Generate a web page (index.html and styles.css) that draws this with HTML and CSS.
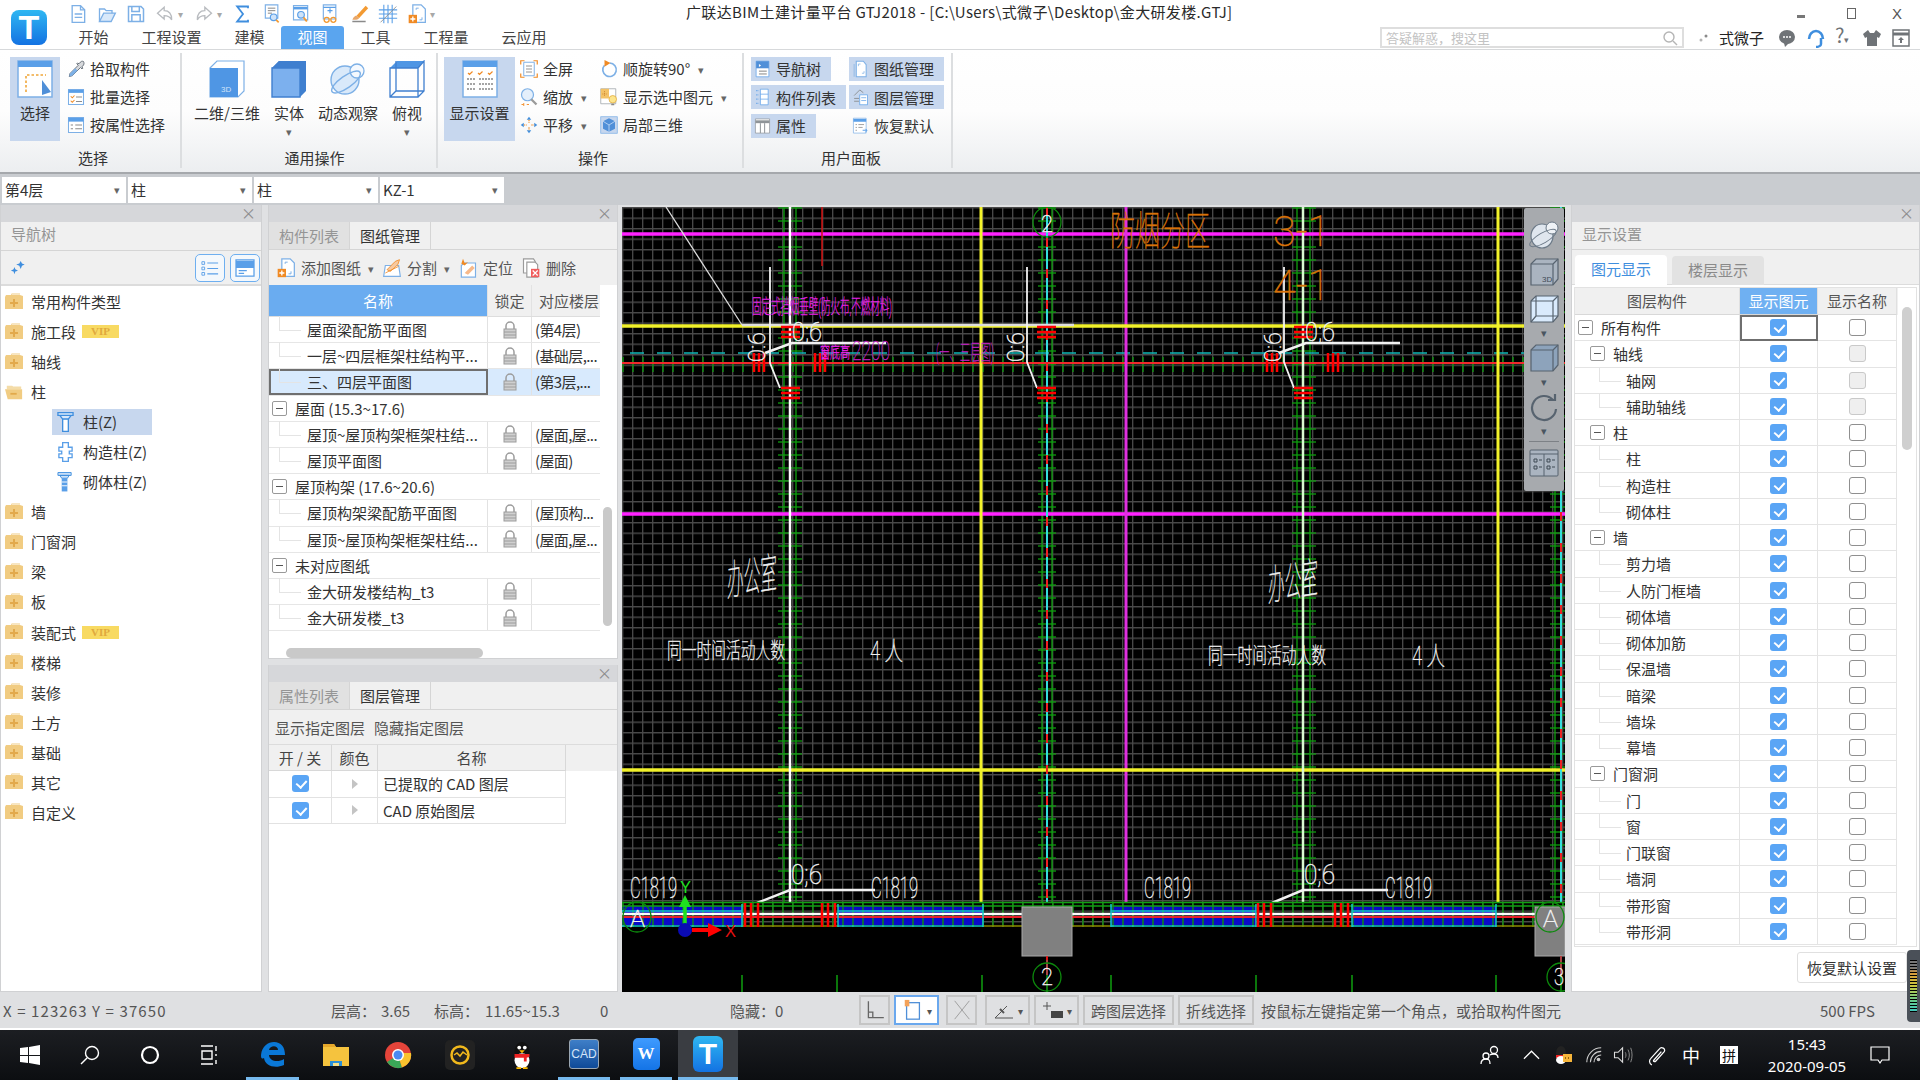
FILE: index.html
```html
<!DOCTYPE html>
<html lang="zh-CN">
<head>
<meta charset="utf-8">
<title>GTJ2018</title>
<link rel="stylesheet" href="styles.css">
</head>
<body>
<svg class="defs" xmlns="http://www.w3.org/2000/svg">
<symbol id="doc" viewBox="0 0 24 24"><path d="M5 2h10l5 5v15H5z" fill="#fff" stroke="#7db0e6" stroke-width="1.6"/><path d="M15 2v5h5M8 12h9M8 16h9" fill="none" stroke="#7db0e6" stroke-width="1.6"/></symbol>
<symbol id="open" viewBox="0 0 24 24"><path d="M3 21V6h6l2 2h7v4" fill="#fff" stroke="#7db0e6" stroke-width="1.6"/><path d="M3 21l5-10h14l-5 10z" fill="#d9e9fa" stroke="#7db0e6" stroke-width="1.6"/></symbol>
<symbol id="save" viewBox="0 0 24 24"><path d="M3 3h15l3 3v15H3z" fill="#fff" stroke="#7db0e6" stroke-width="1.8"/><path d="M7 3v6h9V3M7 21v-8h10v8" fill="none" stroke="#7db0e6" stroke-width="1.8"/></symbol>
<symbol id="undo" viewBox="0 0 24 24"><path d="M11 4L3 11l8 7v-4c4 0 7 1 9 5 0-7-3-11-9-11z" fill="#fff" stroke="#b9bcc0" stroke-width="1.6"/></symbol>
<symbol id="redo" viewBox="0 0 24 24"><path d="M13 4l8 7-8 7v-4c-4 0-7 1-9 5 0-7 3-11 9-11z" fill="#fff" stroke="#b9bcc0" stroke-width="1.6"/></symbol>
<symbol id="sigma" viewBox="0 0 24 24"><path d="M18 5V3H5l7 9-7 9h13v-2" fill="none" stroke="#3f8ede" stroke-width="2.2"/></symbol>
<symbol id="q1" viewBox="0 0 24 24"><path d="M4 1h15v16H4z" fill="#fff" stroke="#7db0e6" stroke-width="1.4"/><path d="M7 5h9M7 8h9M7 11h5" stroke="#888" stroke-width="1.2"/><circle cx="14" cy="16" r="4" fill="#cfe3f9" stroke="#5a9fe8" stroke-width="1.4"/><path d="M17 19l3 3" stroke="#f39a32" stroke-width="2"/></symbol>
<symbol id="q2" viewBox="0 0 24 24"><path d="M3 2h17v17H3z" fill="#fff" stroke="#7db0e6" stroke-width="1.4"/><path d="M3 5h17" stroke="#5a9fe8" stroke-width="3"/><circle cx="12" cy="13" r="4" fill="#cfe3f9" stroke="#5a9fe8" stroke-width="1.4"/><path d="M15 16l4 5" stroke="#f39a32" stroke-width="2.2"/></symbol>
<symbol id="q3" viewBox="0 0 24 24"><path d="M4 1h15v17H4z" fill="#fff" stroke="#7db0e6" stroke-width="1.4"/><path d="M4 4h15M9 8h6M12 5v6" stroke="#5a9fe8" stroke-width="1.4"/><circle cx="8" cy="19" r="3" fill="none" stroke="#f39a32" stroke-width="1.6"/><circle cx="16" cy="19" r="3" fill="none" stroke="#f39a32" stroke-width="1.6"/></symbol>
<symbol id="brush" viewBox="0 0 24 24"><path d="M20 2L9 14l3 3L23 5z" fill="#f39a32"/><path d="M4 21h16" stroke="#8a8a8a" stroke-width="1.8"/><path d="M9 14c-3 0-4 3-5 5 3 0 7 0 8-2z" fill="#e8a76a"/></symbol>
<symbol id="gridic" viewBox="0 0 24 24"><path d="M1 7h22M1 12h22M1 17h22M7 1v22M12 1v22M17 1v22" stroke="#5a9fe8" stroke-width="1.3"/><path d="M3 22L22 3" stroke="#8a8a8a" stroke-width="1"/></symbol>
<symbol id="docplus" viewBox="0 0 24 24"><path d="M7 1h10l5 5v16H7z" fill="#fff" stroke="#7db0e6" stroke-width="1.5"/><path d="M11 7V5h3M18 16v3h-3" fill="none" stroke="#7db0e6" stroke-width="1.2"/><rect x="2" y="13" width="10" height="10" fill="#f08a24"/><path d="M7 15v6M4 18h6" stroke="#fff" stroke-width="1.6"/></symbol>
<symbol id="pick" viewBox="0 0 24 24"><path d="M22 2c-2-1-4 0-5 2l-1 1-2-1-1 1 2 2L4 18l-1 4 4-1 11-11 2 2 1-1-1-2 1-1c2-2 2-4 1-6z" fill="#d7d9dc" stroke="#5d6670" stroke-width="1.2"/><path d="M4 18l7-7 3 3-7 7-4 1z" fill="#7db0e6"/></symbol>
<symbol id="batch" viewBox="0 0 24 24"><path d="M2 2h20v20H2z" fill="#fff" stroke="#7db0e6" stroke-width="1.4"/><path d="M2 4.5h20" stroke="#5a9fe8" stroke-width="4"/><path d="M5 11l2 2 3-3M5 17l2 2 3-3" fill="none" stroke="#f08a24" stroke-width="1.4"/><path d="M12 12h8M12 18h8" stroke="#8a8a8a" stroke-width="1.3"/></symbol>
<symbol id="attr" viewBox="0 0 24 24"><path d="M2 2h20v20H2z" fill="#fff" stroke="#7db0e6" stroke-width="1.4"/><path d="M2 5h20" stroke="#5a9fe8" stroke-width="5"/><path d="M5 12h3M11 12h9M5 17h3M11 17h9" stroke="#8a8a8a" stroke-width="1.4"/></symbol>
<symbol id="selbig" viewBox="0 0 36 38"><path d="M1 1h34v36H1z" fill="#fff" stroke="#7db0e6" stroke-width="1.5"/><path d="M1 4h34" stroke="#5a9fe8" stroke-width="6"/><path d="M9 32V15h20" fill="none" stroke="#f0a73a" stroke-width="1.6" stroke-dasharray="2.5 2"/><path d="M25 20v15l9-3z" fill="#4f8fd8"/></symbol>
<symbol id="box3d" viewBox="0 0 36 38"><path d="M1 8L8 1h27v30l-6 6H1z" fill="#fff" stroke="#7db0e6" stroke-width="1.2"/><path d="M1 8h28v29H1z" fill="#4f96e4"/><text x="12" y="32" font-size="8" fill="#cfe3f9" font-family="Liberation Sans">3D</text></symbol>
<symbol id="solid" viewBox="0 0 36 38"><path d="M1 8L8 1h27v30l-6 6V8z" fill="#3f7fcf"/><path d="M1 8L8 1h27l-6 7z" fill="#3f7fcf"/><path d="M1 8h28v29H1z" fill="#7cb0ee" stroke="#3f7fcf" stroke-width="1.4"/></symbol>
<symbol id="orbit" viewBox="0 0 36 38"><circle cx="15" cy="20" r="14" fill="#d9e9fa" stroke="#7db0e6" stroke-width="1.4"/><circle cx="27" cy="11" r="7" fill="#f5f9fe" stroke="#7db0e6" stroke-width="1.3"/><ellipse cx="16" cy="22" rx="17" ry="6" transform="rotate(-35 16 22)" fill="none" stroke="#7db0e6" stroke-width="1.4"/></symbol>
<symbol id="wire" viewBox="0 0 36 38"><path d="M1 8L8 1h27l-6 7z" fill="#4f96e4"/><path d="M1 8h28v29H1zM29 8l6-7v30l-6 6M1 37l6-6h28M7 31V1" fill="#fff" fill-opacity="0" stroke="#3f7fcf" stroke-width="1.3"/></symbol>
<symbol id="disp" viewBox="0 0 36 38"><path d="M1 1h34v36H1z" fill="#fff" stroke="#7db0e6" stroke-width="1.5"/><path d="M1 4h34" stroke="#5a9fe8" stroke-width="6"/><path d="M6 13l1.500 1.500 3-3M16 13l1.500 1.500 3-3M26 13l1.500 1.500 3-3" fill="none" stroke="#f08a24" stroke-width="1.2"/><path d="M5 19h8M17 19h14M5 24h8M17 24h14M5 29h8M17 29h14" stroke="#888" stroke-width="1.4" stroke-dasharray="2 1"/></symbol>
<symbol id="full" viewBox="0 0 24 24"><path d="M1 6V1h5M18 1h5v5M23 18v5h-5M6 23H1v-5" fill="none" stroke="#f08a24" stroke-width="1.6"/><path d="M5 3h14v18H5z" fill="#fff" stroke="#7db0e6" stroke-width="1.3"/><path d="M8 8h8M8 12h8M8 16h8" stroke="#888" stroke-width="1.2"/></symbol>
<symbol id="zoomi" viewBox="0 0 24 24"><circle cx="10" cy="9" r="8" fill="#e4effb" stroke="#7db0e6" stroke-width="1.6"/><path d="M15 15l7 7" stroke="#9a9a9a" stroke-width="3"/><path d="M2 22h3M5 20v4M9 22h3" stroke="#f08a24" stroke-width="1.2"/></symbol>
<symbol id="pan" viewBox="0 0 24 24"><path d="M12 1l3 4H9zM12 23l3-4H9zM1 12l4-3v6zM23 12l-4-3v6z" fill="#3f8ede"/><path d="M12 5v4M12 15v4M5 12h4M15 12h4" stroke="#f08a24" stroke-width="1.6" stroke-dasharray="2 1"/></symbol>
<symbol id="rot" viewBox="0 0 24 24"><path d="M13 4a9 9 0 1 1-7 3" fill="none" stroke="#7db0e6" stroke-width="2.2"/><path d="M6 0l8 4-8 5z" fill="#f08a24"/></symbol>
<symbol id="showsel" viewBox="0 0 24 24"><path d="M1 1h20v20H1z" fill="#fff" stroke="#9aa0a6"/><path d="M1 1h11v13H1z" fill="#f3c267"/><path d="M3 8h6M6 4v7" stroke="#c9822c" stroke-dasharray="1.5 1"/><circle cx="17" cy="15" r="5" fill="#fde58c" stroke="#e0a83a"/><path d="M15 21h4v2h-4z" fill="#888"/></symbol>
<symbol id="local3d" viewBox="0 0 24 24"><rect x="1" y="1" width="22" height="22" fill="#c7d7ee" stroke="#7db0e6"/><path d="M12 3l8 4v10l-8 4-8-4V7z" fill="#4f8fd8"/><path d="M12 12V21M12 12L4 7M12 12l8-5" stroke="#cfe3f9"/></symbol>
<symbol id="nav" viewBox="0 0 24 24"><path d="M3 1h18v22H3z" fill="#fff" stroke="#5a9fe8"/><path d="M3 1h18v10H3z" fill="#4f8fd8"/><path d="M7 5l3 2-3 2z" fill="#fff"/><path d="M7 15h11M7 19h11" stroke="#7a7a7a" stroke-width="1.3"/></symbol>
<symbol id="drawing" viewBox="0 0 24 24"><path d="M6 1h10l4 5v17H6z" fill="#fff" stroke="#7db0e6" stroke-width="1.5"/><path d="M9 8V5h3M17 15v3h-3" fill="none" stroke="#7db0e6"/><path d="M3 5v18" stroke="#7db0e6"/></symbol>
<symbol id="complist" viewBox="0 0 24 24"><path d="M3 3h4M3 9h4M3 15h4M3 21h4" stroke="#5a9fe8" stroke-dasharray="1 1" stroke-width="2"/><path d="M9 1h11v22H9z" fill="#fff" stroke="#5a9fe8"/><path d="M9 8h11M9 15h11" stroke="#5a9fe8"/></symbol>
<symbol id="layers" viewBox="0 0 24 24"><path d="M3 10l8-8 5 4M3 14h7M3 18h7" fill="none" stroke="#8f9498" stroke-width="1.4"/><rect x="11" y="9" width="11" height="14" fill="#fff" stroke="#5a9fe8"/><path d="M13 13h7M13 17h7" stroke="#5a9fe8"/></symbol>
<symbol id="prop" viewBox="0 0 24 24"><path d="M2 2h20v20H2z" fill="#fff" stroke="#8f9498"/><path d="M2 6h20" stroke="#8f9498" stroke-width="4"/><path d="M9 8v14M15 8v14" stroke="#8f9498" stroke-width="1.4"/></symbol>
<symbol id="restore" viewBox="0 0 24 24"><path d="M2 1h18v21H2z" fill="#fff" stroke="#7db0e6"/><path d="M2 4h18" stroke="#5a9fe8" stroke-width="4"/><path d="M5 10h2M5 14h2M5 18h2M9 10h8M9 14h6" stroke="#7a7a7a"/><path d="M15 18h6l-2-2M21 18l-2 3" fill="none" stroke="#5a9fe8" stroke-width="1.4"/></symbol>
<symbol id="folder" viewBox="0 0 18 20"><path d="M0 5l1-2h5l1-2h8v2l3 1v13H0z" fill="#f1cc82"/><path d="M7 2h8" stroke="#fff"/><path d="M9 7v8M5 11h8" stroke="#e2a94b" stroke-width="2"/></symbol>
<symbol id="folderopen" viewBox="0 0 20 20"><path d="M2 3h6l1 1h9v3H2z" fill="#f4dca8"/><path d="M0 7h19v11H3z" fill="#f1cc82"/><path d="M6 12h7" stroke="#e2a94b" stroke-width="2"/></symbol>
<symbol id="colt" viewBox="0 0 18 22"><path d="M1 1h16v3H1zM3 4h12l-3 4H6z" fill="#d9e9fa" stroke="#3f8ede" stroke-width="1.4"/><path d="M6 8h6v13H6z" fill="#fff" stroke="#3f8ede" stroke-width="1.4"/></symbol>
<symbol id="colc" viewBox="0 0 18 22"><path d="M6 1h6v5h4v4h-3v3h3v4h-4v4H6v-4H2v-4h3v-3H2V6h4z" fill="#fff" stroke="#5a9fe8" stroke-width="1.4"/></symbol>
<symbol id="colb" viewBox="0 0 18 22"><path d="M1 1h14v3H1zM3 4h10l-2 3H5z" fill="#cfe3f9" stroke="#3f8ede"/><path d="M5 7h6v14H5z" fill="#5a9fe8"/><path d="M5 11h6M5 15h6" stroke="#fff"/></symbol>
<symbol id="lock" viewBox="0 0 14 18"><path d="M3 8V5a4 4 0 0 1 8 0v3" fill="none" stroke="#9c9c9c" stroke-width="1.5"/><rect x="1" y="8" width="12" height="9" fill="#cfcfcf" stroke="#9c9c9c"/><path d="M1 11h12M1 14h12" stroke="#9c9c9c"/></symbol>
<symbol id="spark" viewBox="0 0 18 18"><path d="M12 1l1.500 3 3 1-3 1.500L12 10l-1.500-3.500L7 5l3.500-1zM5 8l1 2.500L9 12l-3 1-1 3-1-3-3-1 3-1.500z" fill="#3f8ede"/></symbol>
<symbol id="list" viewBox="0 0 20 20"><path d="M1 3h3v3H1zM1 9h3v3H1zM1 15h3v3H1z" fill="none" stroke="#5a9fe8"/><path d="M7 4.500h12M7 10.500h12M7 16.500h12" stroke="#5a9fe8" stroke-width="1.2"/></symbol>
<symbol id="panel" viewBox="0 0 22 20"><path d="M1 1h20v18H1z" fill="#fff" stroke="#5a9fe8" stroke-width="1.4"/><path d="M1 6h20" stroke="#5a9fe8" stroke-width="8"/><path d="M4 13h9M4 16h6" stroke="#5a9fe8" stroke-width="1.4"/></symbol>
<symbol id="split" viewBox="0 0 24 24"><path d="M2 22l2-13h16l2 13z" fill="#fff" stroke="#7db0e6" stroke-width="1.4"/><path d="M6 14l10-10 5-2-2 6-9 8z" fill="#f7c9a0" stroke="#f08a24"/><path d="M4 18l16-8" stroke="#f08a24"/></symbol>
<symbol id="locate" viewBox="0 0 24 24"><path d="M7 6h14v17H4V9z" fill="#fff" stroke="#7db0e6" stroke-width="1.4"/><path d="M8 18l9-9 3 3-8 8z" fill="#f7b98a"/><path d="M6 1l2 5 4-1-4 4-4-2z" fill="#f08a24"/></symbol>
<symbol id="del" viewBox="0 0 24 24"><path d="M3 1h12l2 3v14H3z" fill="#fff" stroke="#9a9a9a" stroke-width="1.4"/><path d="M7 5h10l3 3v15H7z" fill="#fff" stroke="#9a9a9a" stroke-width="1.4"/><rect x="12" y="13" width="10" height="10" fill="#f15c5c"/><path d="M14 15l6 6M20 15l-6 6" stroke="#fff" stroke-width="1.4"/></symbol>
</svg>

<header class="head">
  <div class="logo-box"><div class="logo">T</div></div>
  <div class="head-main">
    <div class="row-title">
      <div class="qat">
        <svg class="q"><use href="#doc"/></svg>
        <svg class="q"><use href="#open"/></svg>
        <svg class="q"><use href="#save"/></svg>
        <svg class="q"><use href="#undo"/></svg><span class="dn">▾</span>
        <svg class="q"><use href="#redo"/></svg><span class="dn">▾</span>
        <svg class="q"><use href="#sigma"/></svg>
        <svg class="q"><use href="#q1"/></svg>
        <svg class="q"><use href="#q2"/></svg>
        <svg class="q"><use href="#q3"/></svg>
        <svg class="q"><use href="#brush"/></svg>
        <svg class="q"><use href="#gridic"/></svg>
        <svg class="q"><use href="#docplus"/></svg><span class="dn">▾</span>
      </div>
      <div class="title">广联达BIM土建计量平台 GTJ2018 - [C:\Users\式微子\Desktop\金大研发楼.GTJ]</div>
      <div class="winctl"><span class="wc-min"></span><span class="wc-res"></span><span class="wc-x">X</span></div>
    </div>
    <div class="row-tabs">
      <span class="tab">开始</span><span class="tab">工程设置</span><span class="tab">建模</span><span class="tab on">视图</span><span class="tab">工具</span><span class="tab">工程量</span><span class="tab">云应用</span>
      <div class="search"><span>答疑解惑，搜这里</span>
        <svg class="sr" viewBox="0 0 16 16"><circle cx="7" cy="7" r="5" fill="none" stroke="#b5b5b5" stroke-width="1.4"/><path d="M11 11l4 4" stroke="#b5b5b5" stroke-width="1.4"/></svg>
      </div>
      <div class="user">
        <svg class="u1" viewBox="0 0 12 12"><circle cx="3" cy="8" r="1.500" fill="#b5b5b5"/><circle cx="8" cy="4" r="1.500" fill="#8a8a8a"/></svg>
        <span class="uname">式微子</span>
        <svg class="ui" viewBox="0 0 20 20"><ellipse cx="10" cy="9" rx="8" ry="7" fill="#6f7377"/><path d="M7 15l1 4 4-4z" fill="#6f7377"/><path d="M6 9h2M9 9h2M12 9h2" stroke="#fff" stroke-width="1.500"/></svg>
        <svg class="ui" viewBox="0 0 20 20"><path d="M3 11a7 8 0 0 1 14 0" fill="none" stroke="#3f8ede" stroke-width="2.500"/><path d="M15 10v6c0 2-3 3-5 3" fill="none" stroke="#3f8ede" stroke-width="2.500"/></svg>
        <span class="qm">?<i>▾</i></span>
        <svg class="ui" viewBox="0 0 20 20"><path d="M6 2L1 6l2 4 2-1v9h10V9l2 1 2-4-5-4-2 3H8z" fill="#6f7377"/></svg>
        <svg class="ui" viewBox="0 0 20 20"><path d="M2 2h16v16H2z" fill="none" stroke="#6f7377" stroke-width="1.500"/><path d="M2 6h16" stroke="#6f7377" stroke-width="3"/><path d="M10 9l3 3h-2v3H9v-3H7z" fill="#6f7377"/></svg>
      </div>
    </div>
  </div>
</header>

<section class="ribbon">
  <div class="grp g1">
    <div class="grp-body">
      <div class="big on w50"><svg class="ib"><use href="#selbig"/></svg><span>选择</span></div>
      <div class="col c1">
        <div class="sm"><svg class="is"><use href="#pick"/></svg>拾取构件</div>
        <div class="sm"><svg class="is"><use href="#batch"/></svg>批量选择</div>
        <div class="sm"><svg class="is"><use href="#attr"/></svg>按属性选择</div>
      </div>
    </div>
    <div class="glabel">选择</div>
  </div>
  <div class="grp g2">
    <div class="grp-body">
      <div class="big w68"><svg class="ib"><use href="#box3d"/></svg><span>二维/三维</span></div>
      <div class="big w56"><svg class="ib"><use href="#solid"/></svg><span>实体</span><i class="ar">▾</i></div>
      <div class="big w62"><svg class="ib"><use href="#orbit"/></svg><span>动态观察</span></div>
      <div class="big w56"><svg class="ib"><use href="#wire"/></svg><span>俯视</span><i class="ar">▾</i></div>
    </div>
    <div class="glabel">通用操作</div>
  </div>
  <div class="grp g3">
    <div class="grp-body">
      <div class="big on w71"><svg class="ib"><use href="#disp"/></svg><span>显示设置</span></div>
      <div class="col c3a">
        <div class="sm tight"><svg class="is"><use href="#full"/></svg>全屏</div>
        <div class="sm tight"><svg class="is"><use href="#zoomi"/></svg>缩放<i class="ar2">▾</i></div>
        <div class="sm tight"><svg class="is"><use href="#pan"/></svg>平移<i class="ar2">▾</i></div>
      </div>
      <div class="col c3b">
        <div class="sm tight"><svg class="is"><use href="#rot"/></svg>顺旋转90°<i class="ar2">▾</i></div>
        <div class="sm tight"><svg class="is"><use href="#showsel"/></svg>显示选中图元<i class="ar2">▾</i></div>
        <div class="sm tight"><svg class="is"><use href="#local3d"/></svg>局部三维</div>
      </div>
    </div>
    <div class="glabel">操作</div>
  </div>
  <div class="grp g4">
    <div class="grp-body ug">
      <div class="us on w80"><svg class="iu"><use href="#nav"/></svg>导航树</div>
      <div class="us on w95"><svg class="iu"><use href="#drawing"/></svg>图纸管理</div>
      <div class="us on w95"><svg class="iu"><use href="#complist"/></svg>构件列表</div>
      <div class="us on w95"><svg class="iu"><use href="#layers"/></svg>图层管理</div>
      <div class="us on w65"><svg class="iu"><use href="#prop"/></svg>属性</div>
      <div class="us w95"><svg class="iu"><use href="#restore"/></svg>恢复默认</div>
    </div>
    <div class="glabel">用户面板</div>
  </div>
</section>

<section class="selbar">
  <div class="combo">第4层<i>▾</i></div>
  <div class="combo">柱<i>▾</i></div>
  <div class="combo">柱<i>▾</i></div>
  <div class="combo">KZ-1<i>▾</i></div>
</section>

<main class="main">
  <aside class="nav panel">
    <div class="strip"><span>×</span></div>
    <div class="ptitle">导航树</div>
    <div class="navtool">
      <svg class="sp"><use href="#spark"/></svg>
      <span class="tb first"><svg><use href="#list"/></svg></span>
      <span class="tb"><svg><use href="#panel"/></svg></span>
    </div>
    <div class="tree">
      <div class="ti"><svg class="fo"><use href="#folder"/></svg>常用构件类型</div>
      <div class="ti"><svg class="fo"><use href="#folder"/></svg>施工段<b class="vip">VIP</b></div>
      <div class="ti"><svg class="fo"><use href="#folder"/></svg>轴线</div>
      <div class="ti"><svg class="fo"><use href="#folderopen"/></svg>柱</div>
      <div class="ti sub act"><span class="actbg"><svg class="ci"><use href="#colt"/></svg>柱(Z)</span></div>
      <div class="ti sub"><span class="actbg"><svg class="ci"><use href="#colc"/></svg>构造柱(Z)</span></div>
      <div class="ti sub"><span class="actbg"><svg class="ci"><use href="#colb"/></svg>砌体柱(Z)</span></div>
      <div class="ti"><svg class="fo"><use href="#folder"/></svg>墙</div>
      <div class="ti"><svg class="fo"><use href="#folder"/></svg>门窗洞</div>
      <div class="ti"><svg class="fo"><use href="#folder"/></svg>梁</div>
      <div class="ti"><svg class="fo"><use href="#folder"/></svg>板</div>
      <div class="ti"><svg class="fo"><use href="#folder"/></svg>装配式<b class="vip">VIP</b></div>
      <div class="ti"><svg class="fo"><use href="#folder"/></svg>楼梯</div>
      <div class="ti"><svg class="fo"><use href="#folder"/></svg>装修</div>
      <div class="ti"><svg class="fo"><use href="#folder"/></svg>土方</div>
      <div class="ti"><svg class="fo"><use href="#folder"/></svg>基础</div>
      <div class="ti"><svg class="fo"><use href="#folder"/></svg>其它</div>
      <div class="ti"><svg class="fo"><use href="#folder"/></svg>自定义</div>
    </div>
  </aside>

  <div class="midcol">
    <section class="panel mtop">
      <div class="strip"><span>×</span></div>
      <div class="ptabs"><span class="pt">构件列表</span><span class="pt on">图纸管理</span></div>
      <div class="mtool">
        <span class="mt"><svg><use href="#docplus"/></svg>添加图纸<i>▾</i></span>
        <span class="mt"><svg><use href="#split"/></svg>分割<i>▾</i></span>
        <span class="mt"><svg><use href="#locate"/></svg>定位</span>
        <span class="mt"><svg><use href="#del"/></svg>删除</span>
      </div>
      <div class="dtable">
        <div class="dr dh"><span class="hs">名称</span><span>锁定</span><span>对应楼层</span></div>
        <div class="dr leaf"><span>屋面梁配筋平面图</span><span><svg class="lk"><use href="#lock"/></svg></span><span>(第4层)</span></div>
        <div class="dr leaf"><span>一层~四层框架柱结构平...</span><span><svg class="lk"><use href="#lock"/></svg></span><span>(基础层,...</span></div>
        <div class="dr leaf sel"><span>三、四层平面图</span><span><svg class="lk"><use href="#lock"/></svg></span><span>(第3层,...</span></div>
        <div class="dr grpr"><em class="mbox"></em>屋面 (15.3~17.6)</div>
        <div class="dr leaf"><span>屋顶~屋顶构架框架柱结...</span><span><svg class="lk"><use href="#lock"/></svg></span><span>(屋面,屋...</span></div>
        <div class="dr leaf"><span>屋顶平面图</span><span><svg class="lk"><use href="#lock"/></svg></span><span>(屋面)</span></div>
        <div class="dr grpr"><em class="mbox"></em>屋顶构架 (17.6~20.6)</div>
        <div class="dr leaf"><span>屋顶构架梁配筋平面图</span><span><svg class="lk"><use href="#lock"/></svg></span><span>(屋顶构...</span></div>
        <div class="dr leaf"><span>屋顶~屋顶构架框架柱结...</span><span><svg class="lk"><use href="#lock"/></svg></span><span>(屋面,屋...</span></div>
        <div class="dr grpr"><em class="mbox"></em>未对应图纸</div>
        <div class="dr leaf"><span>金大研发楼结构_t3</span><span><svg class="lk"><use href="#lock"/></svg></span><span></span></div>
        <div class="dr leaf"><span>金大研发楼_t3</span><span><svg class="lk"><use href="#lock"/></svg></span><span></span></div>
        <div class="vsb"></div>
        <div class="hsb"></div>
      </div>
    </section>
    <section class="panel mbot">
      <div class="strip"><span>×</span></div>
      <div class="ptabs"><span class="pt">属性列表</span><span class="pt on">图层管理</span></div>
      <div class="ltool"><span>显示指定图层</span><span>隐藏指定图层</span></div>
      <div class="lhead"><span>开 / 关</span><span>颜色</span><span>名称</span></div>
      <div class="lrow"><span><em class="chk"></em></span><span><i class="tri"></i></span><span class="ln">已提取的 CAD 图层</span></div>
      <div class="lrow"><span><em class="chk"></em></span><span><i class="tri"></i></span><span class="ln">CAD 原始图层</span></div>
    </section>
  </div>

  <section class="canvas">
    <svg class="cad" viewBox="622 207 943 785" xmlns="http://www.w3.org/2000/svg">
      <defs>
        <pattern id="g" x="622" y="207" width="10" height="10.500" patternUnits="userSpaceOnUse"><path d="M0 .7H10M.7 0V10.500" stroke="#4a4a4a" stroke-width="1.300" fill="none"/></pattern>
        <pattern id="gt" x="0" y="207" width="10" height="13" patternUnits="userSpaceOnUse"><path d="M0 1H10" stroke="#0c9c0c" stroke-width="1.300"/></pattern>
        <pattern id="gv" x="622" y="0" width="10" height="20" patternUnits="userSpaceOnUse"><path d="M1 0V20" stroke="#0c920c" stroke-width="1.400"/></pattern>
      </defs>
      <rect x="622" y="207" width="943" height="785" fill="#000"/>
      <rect x="622" y="207" width="943" height="720" fill="url(#g)"/>
      <g>
        <rect x="778" y="207" width="24" height="695" fill="url(#gt)"/>
        <rect x="1038" y="207" width="18" height="695" fill="url(#gt)"/>
        <rect x="1292" y="207" width="24" height="695" fill="url(#gt)"/>
        <rect x="1550" y="207" width="15" height="695" fill="url(#gt)"/>
        <path d="M784 207V905M796 207V905M1042 207V905M1052 207V905M1297 207V905M1310 207V905M1555 207V905" stroke="#0ea00e" stroke-width="1.300"/>
      </g>
      <rect x="622" y="357" width="943" height="15" fill="url(#gv)"/>
      <path d="M630 353H1565" stroke="#0fb7b7" stroke-width="1.500" stroke-dasharray="14 13"/>
      <path d="M622 363H1565" stroke="#f02a2a" stroke-width="2"/>
      <path d="M622 234H1565M622 514H1565" stroke="#ff22ff" stroke-width="3.500"/>
      <path d="M1126 207V903" stroke="#e030e0" stroke-width="3"/>
      <path d="M622 326H1565M622 770H1565" stroke="#f0f02a" stroke-width="3.500"/>
      <path d="M981 207V905M1498 207V905" stroke="#f3f32a" stroke-width="3"/>
      <path d="M790 207V915" stroke="#fff" stroke-width="2.500"/>
      <path d="M1303 207V915" stroke="#d8f7d0" stroke-width="2.500"/>
      <path d="M1047 207V975M1561 207V975" stroke="#35dddd" stroke-width="2"/>
      <path d="M1047 207V975M1561 450V975" stroke="#ee2222" stroke-width="2" stroke-dasharray="9 22"/>
      <path d="M822 207V266" stroke="#d01010" stroke-width="1.500"/>
      <path d="M742 325H1074" stroke="#ddd" stroke-width="2.500"/>
      <path d="M666 207L742 325" stroke="#ddd" stroke-width="1.300" fill="none"/>
      <g stroke="#f2f2f2" fill="none" stroke-width="1.800">
        <path d="M770 267V363L780 388M1027 267V362L1037 388M1284 267V362L1294 388"/>
        <path d="M765 353L792 343H886M1279 353L1306 343H1400" stroke-width="2.500"/>
        <path d="M757 903L790 890H875M1272 903L1303 890H1388" stroke-width="2.500"/>
      </g>
      <g stroke="#f00" stroke-width="2.500">
        <path d="M781 327h19M781 332h19M781 337h19M1037 327h19M1037 332h19M1037 337h19M1294 327h19M1294 332h19M1294 337h19"/>
        <path d="M781 388h19M781 393h19M781 398h19M1037 388h19M1037 393h19M1037 398h19M1294 388h19M1294 393h19M1294 398h19"/>
        <path d="M754 353v19M759 353v19M764 353v19M815 353v19M820 353v19M825 353v19M1267 353v19M1272 353v19M1277 353v19M1328 353v19M1333 353v19M1338 353v19"/>
      </g>

      <rect x="622" y="902" width="943" height="25" fill="#000"/>
      <rect x="622" y="902" width="943" height="25" fill="url(#g)"/>
      <g fill="#0a0ac8">
        <rect x="622" y="906" width="120" height="8"/><rect x="838" y="906" width="145" height="8"/><rect x="1111" y="906" width="145" height="8"/><rect x="1352" y="906" width="144" height="8"/>
        <rect x="622" y="918" width="120" height="7"/><rect x="838" y="918" width="145" height="7"/><rect x="1111" y="918" width="145" height="7"/><rect x="1352" y="918" width="144" height="7"/>
      </g>
      <rect x="622" y="902" width="943" height="25" fill="url(#gv)"/>
      <path d="M622 902.500H1565M622 906H1565" stroke="#12a012" stroke-width="1.300"/>
      <path d="M622 926H742M838 926H983M1111 926H1256M1352 926H1496M622 911H742M838 911H983M1111 911H1256M1352 911H1496" stroke="#12c8c8" stroke-width="1.600"/>
      <path d="M742 926H838M983 926H1022M1072 926H1111M1256 926H1352M1496 926H1535" stroke="#8a8a00" stroke-width="1.600"/>
      <path d="M622 914H1565" stroke="#fff" stroke-width="2.500"/>
      <path d="M622 917H1565" stroke="#e8202a" stroke-width="2"/>
      <path d="M742 904V927M838 904V927M983 904V927M1111 904V927M1256 904V927M1352 904V927M1496 904V927" stroke="#12c8c8" stroke-width="1.500"/>
      <g stroke="#f00" stroke-width="2.500">
        <path d="M745 903v24M751 903v24M758 903v24M822 903v24M828 903v24M835 903v24M1258 903v24M1264 903v24M1271 903v24M1335 903v24M1341 903v24M1348 903v24"/>
      </g>
      <rect x="1022" y="907" width="50" height="49" fill="#808080" stroke="#aaa"/>
      <rect x="1535" y="907" width="30" height="49" fill="#808080" stroke="#aaa"/>
      <path d="M1047 956V975" stroke="#d01010" stroke-width="1.500"/><path d="M1561 956V975" stroke="#d01010" stroke-width="1.500"/>
      <path d="M742 975V992M837 975V992M982 975V992M1047 975V992M1111 975V992M1256 975V992M1352 975V992M1496 975V992M1561 975V992" stroke="#0f9f0f" stroke-width="1.500"/>

      <g fill="none" stroke="#0c8a0c" stroke-width="1.300">
        <ellipse cx="637" cy="917" rx="14" ry="15"/><ellipse cx="1550" cy="917" rx="14" ry="15"/><ellipse cx="1047" cy="222" rx="14" ry="15"/><ellipse cx="1047" cy="977" rx="14" ry="14"/><ellipse cx="1561" cy="977" rx="14" ry="14"/>
      </g>
      <g class="ct">
        <text x="630" y="927" textLength="15" lengthAdjust="spacingAndGlyphs" font-size="24">A</text>
        <text x="1543" y="927" textLength="15" lengthAdjust="spacingAndGlyphs" font-size="24">A</text>
        <text x="1041" y="232" textLength="12" lengthAdjust="spacingAndGlyphs" font-size="24">2</text>
        <text x="1041" y="985" textLength="12" lengthAdjust="spacingAndGlyphs" font-size="24">2</text>
        <text x="1554" y="985" textLength="10" lengthAdjust="spacingAndGlyphs" font-size="24">3</text>
        <text x="630" y="898" textLength="47" lengthAdjust="spacingAndGlyphs" font-size="29">C1819</text>
        <text x="871" y="898" textLength="47" lengthAdjust="spacingAndGlyphs" font-size="29">C1819</text>
        <text x="1144" y="898" textLength="47" lengthAdjust="spacingAndGlyphs" font-size="29">C1819</text>
        <text x="1385" y="898" textLength="47" lengthAdjust="spacingAndGlyphs" font-size="29">C1819</text>
        <text x="791" y="884" textLength="31" lengthAdjust="spacingAndGlyphs" font-size="28">0;6</text>
        <text x="1304" y="884" textLength="31" lengthAdjust="spacingAndGlyphs" font-size="28">0;6</text>
        <text x="792" y="341" textLength="30" lengthAdjust="spacingAndGlyphs" font-size="26">0;6</text>
        <text x="1305" y="341" textLength="30" lengthAdjust="spacingAndGlyphs" font-size="26">0;6</text>
        <text transform="translate(765 362) rotate(-90)" textLength="30" lengthAdjust="spacingAndGlyphs" font-size="24">0:6</text>
        <text transform="translate(1024 362) rotate(-90)" textLength="30" lengthAdjust="spacingAndGlyphs" font-size="24">0:6</text>
        <text transform="translate(1281 362) rotate(-90)" textLength="30" lengthAdjust="spacingAndGlyphs" font-size="24">0:6</text>
        <text x="667" y="658" textLength="118" lengthAdjust="spacingAndGlyphs" font-size="22">同一时间活动人数</text>
        <text x="1208" y="663" textLength="118" lengthAdjust="spacingAndGlyphs" font-size="22">同一时间活动人数</text>
        <text x="870" y="660" textLength="33" lengthAdjust="spacingAndGlyphs" font-size="26">4 人</text>
        <text x="1412" y="665" textLength="33" lengthAdjust="spacingAndGlyphs" font-size="26">4 人</text>
        <text transform="translate(727 596) skewY(-10)" textLength="50" lengthAdjust="spacingAndGlyphs" font-size="42">办公室</text>
        <text transform="translate(1268 601) skewY(-10)" textLength="50" lengthAdjust="spacingAndGlyphs" font-size="42">办公室</text>
      </g>
      <g class="cm">
        <text x="752" y="314" textLength="140" lengthAdjust="spacingAndGlyphs" font-size="20">固定式挡烟垂壁(防火布,不燃材料)</text>
        <text x="820" y="358" textLength="30" lengthAdjust="spacingAndGlyphs" font-size="16">窗底高</text>
        <text x="852" y="360" textLength="38" lengthAdjust="spacingAndGlyphs" font-size="26" class="thin">2200</text>
        <text x="936" y="360" textLength="58" lengthAdjust="spacingAndGlyphs" font-size="22" class="thin">(一、三层图)</text>
      </g>
      <g class="co">
        <text x="1110" y="245" textLength="100" lengthAdjust="spacingAndGlyphs" font-size="40">防烟分区</text>
        <text x="1273" y="246" textLength="57" lengthAdjust="spacingAndGlyphs" font-size="42">3-1</text>
        <text x="1273" y="300" textLength="57" lengthAdjust="spacingAndGlyphs" font-size="42">4-1</text>
      </g>
      <path d="M685 930V905" stroke="#1fe01f" stroke-width="3.500"/><path d="M685 895l6 12h-12z" fill="#1fe01f"/>
      <path d="M692 930h16" stroke="#f00" stroke-width="4"/><path d="M722 930l-14-7v14z" fill="#f00"/>
      <circle cx="685" cy="930" r="7" fill="#0a0ab4"/>
      <text x="680" y="893" class="gy" font-size="17" textLength="11" lengthAdjust="spacingAndGlyphs">Y</text>
      <text x="725" y="937" class="rx" font-size="17" textLength="11" lengthAdjust="spacingAndGlyphs">X</text>
    </svg>
    <div class="vtools">
      <svg class="vt" viewBox="0 0 30 30"><ellipse cx="13" cy="16" rx="11" ry="12" fill="#dfe6ee" stroke="#6c7a88" stroke-width="1.200"/><circle cx="23" cy="8" r="6" fill="#eef2f6" stroke="#6c7a88"/><ellipse cx="14" cy="18" rx="15" ry="5" transform="rotate(-30 14 18)" fill="none" stroke="#6c7a88"/></svg>
      <svg class="vt" viewBox="0 0 30 30"><path d="M2 7l5-5h22v20l-5 6H2z" fill="#aab4c0" stroke="#57636f" stroke-width="1.200"/><path d="M2 7h22v21M24 7l5-5" fill="none" stroke="#57636f" stroke-width="1.200"/><text x="13" y="25" font-size="8" fill="#3f4a55" font-family="Liberation Sans">3D</text></svg>
      <svg class="vt" viewBox="0 0 30 30"><path d="M2 7l5-5h22v20l-5 6H2z" fill="#d9eafc" stroke="#57636f" stroke-width="1.200"/><path d="M2 7h22v21M24 7l5-5M7 2v20h22M2 28l5-6" fill="none" stroke="#57636f" stroke-width="1.200"/></svg>
      <i class="vd">▾</i>
      <svg class="vt" viewBox="0 0 30 30"><path d="M2 7l5-5h22v20l-5 6H2z" fill="#8da3bb" stroke="#57636f" stroke-width="1.200"/><path d="M2 7h22v21M24 7l5-5" fill="none" stroke="#57636f" stroke-width="1.200"/></svg>
      <i class="vd">▾</i>
      <svg class="vt" viewBox="0 0 30 30"><path d="M24 8A12 12 0 1 0 27 17" fill="none" stroke="#57636f" stroke-width="2.200"/><path d="M19 8h7V2" fill="none" stroke="#57636f" stroke-width="2.200"/></svg>
      <i class="vd">▾</i>
      <hr class="vs">
      <svg class="vt" viewBox="0 0 30 30"><rect x="1" y="2" width="28" height="26" rx="1" fill="#aab4c0" stroke="#57636f"/><path d="M1 6h28M15 6v22" stroke="#57636f"/><path d="M5 11h3v3H5zM5 18h3v3H5zM18 11h3v3h-3zM18 18h3v3h-3z" fill="none" stroke="#3f4a55"/><path d="M10 12h3M10 19h3M23 12h3M23 19h3" stroke="#3f4a55"/></svg>
    </div>
  </section>

  <aside class="panel right">
    <div class="strip"><span>×</span></div>
    <div class="ptitle rp">显示设置</div>
    <div class="rtabs"><span class="rt on">图元显示</span><span class="rt">楼层显示</span></div>
    <div class="rtable">
      <div class="rh"><span>图层构件</span><span class="hs">显示图元</span><span>显示名称</span></div>
      <div class="rr l0 cur"><span class="n"><em class="mbox"></em>所有构件</span><span class="cc"><em class="chk"></em></span><span class="cc"><em class="box"></em></span></div>
      <div class="rr l1"><span class="n"><em class="mbox"></em>轴线</span><span class="cc"><em class="chk"></em></span><span class="cc"><em class="box dis"></em></span></div>
      <div class="rr l2"><span class="n">轴网</span><span class="cc"><em class="chk"></em></span><span class="cc"><em class="box dis"></em></span></div>
      <div class="rr l2"><span class="n">辅助轴线</span><span class="cc"><em class="chk"></em></span><span class="cc"><em class="box dis"></em></span></div>
      <div class="rr l1"><span class="n"><em class="mbox"></em>柱</span><span class="cc"><em class="chk"></em></span><span class="cc"><em class="box"></em></span></div>
      <div class="rr l2"><span class="n">柱</span><span class="cc"><em class="chk"></em></span><span class="cc"><em class="box"></em></span></div>
      <div class="rr l2"><span class="n">构造柱</span><span class="cc"><em class="chk"></em></span><span class="cc"><em class="box"></em></span></div>
      <div class="rr l2"><span class="n">砌体柱</span><span class="cc"><em class="chk"></em></span><span class="cc"><em class="box"></em></span></div>
      <div class="rr l1"><span class="n"><em class="mbox"></em>墙</span><span class="cc"><em class="chk"></em></span><span class="cc"><em class="box"></em></span></div>
      <div class="rr l2"><span class="n">剪力墙</span><span class="cc"><em class="chk"></em></span><span class="cc"><em class="box"></em></span></div>
      <div class="rr l2"><span class="n">人防门框墙</span><span class="cc"><em class="chk"></em></span><span class="cc"><em class="box"></em></span></div>
      <div class="rr l2"><span class="n">砌体墙</span><span class="cc"><em class="chk"></em></span><span class="cc"><em class="box"></em></span></div>
      <div class="rr l2"><span class="n">砌体加筋</span><span class="cc"><em class="chk"></em></span><span class="cc"><em class="box"></em></span></div>
      <div class="rr l2"><span class="n">保温墙</span><span class="cc"><em class="chk"></em></span><span class="cc"><em class="box"></em></span></div>
      <div class="rr l2"><span class="n">暗梁</span><span class="cc"><em class="chk"></em></span><span class="cc"><em class="box"></em></span></div>
      <div class="rr l2"><span class="n">墙垛</span><span class="cc"><em class="chk"></em></span><span class="cc"><em class="box"></em></span></div>
      <div class="rr l2"><span class="n">幕墙</span><span class="cc"><em class="chk"></em></span><span class="cc"><em class="box"></em></span></div>
      <div class="rr l1"><span class="n"><em class="mbox"></em>门窗洞</span><span class="cc"><em class="chk"></em></span><span class="cc"><em class="box"></em></span></div>
      <div class="rr l2"><span class="n">门</span><span class="cc"><em class="chk"></em></span><span class="cc"><em class="box"></em></span></div>
      <div class="rr l2"><span class="n">窗</span><span class="cc"><em class="chk"></em></span><span class="cc"><em class="box"></em></span></div>
      <div class="rr l2"><span class="n">门联窗</span><span class="cc"><em class="chk"></em></span><span class="cc"><em class="box"></em></span></div>
      <div class="rr l2"><span class="n">墙洞</span><span class="cc"><em class="chk"></em></span><span class="cc"><em class="box"></em></span></div>
      <div class="rr l2"><span class="n">带形窗</span><span class="cc"><em class="chk"></em></span><span class="cc"><em class="box"></em></span></div>
      <div class="rr l2"><span class="n">带形洞</span><span class="cc"><em class="chk"></em></span><span class="cc"><em class="box"></em></span></div>
      <div class="rsb"></div>
    </div>
    <div class="rfoot"><button class="rbtn">恢复默认设置</button></div>
  </aside>
</main>

<footer class="status">
  <span class="s-xy">X = 123263 Y = 37650</span>
  <span class="s-h1">层高：</span><span class="s-h2">3.65</span>
  <span class="s-e1">标高：</span><span class="s-e2">11.65~15.3</span>
  <span class="s-z">0</span>
  <span class="s-hid">隐藏：0</span>
  <span class="sb b1"><svg viewBox="0 0 20 20"><path d="M4 2v15h14M4 12h4v5" fill="none" stroke="#666" stroke-width="1.200"/></svg></span>
  <span class="sb b2"><svg viewBox="0 0 20 24"><rect x="3" y="4" width="14" height="18" fill="#fff" stroke="#4f8fd8" stroke-width="1.400"/><rect x="1" y="1" width="5" height="7" fill="#f3a25a"/></svg><i>▾</i></span>
  <span class="sb b3"><svg viewBox="0 0 20 24"><path d="M2 2l16 20M18 2L2 22" stroke="#9a9a9a"/></svg></span>
  <span class="sb b4"><svg viewBox="0 0 22 22"><path d="M2 19h18M2 19L14 7" stroke="#555" fill="none"/><path d="M7 10l4 4" stroke="#555" stroke-width="2"/></svg><i>▾</i></span>
  <span class="sb b4"><svg viewBox="0 0 22 22"><path d="M5 3v8M1 7h8" stroke="#555"/><rect x="9" y="12" width="12" height="7" fill="#444"/></svg><i>▾</i></span>
  <span class="sb txt wa">跨图层选择</span>
  <span class="sb txt wb">折线选择</span>
  <span class="s-hint">按鼠标左键指定第一个角点，或拾取构件图元</span>
  <span class="s-fps">500 FPS</span>
  <span class="fpsw"><i></i></span>
</footer>

<nav class="taskbar">
  <span class="tk"><svg class="t1" viewBox="0 0 20 20"><path d="M0 3l8-1v8H0zM9 2l11-2v10H9zM0 11h8v7l-8-1zM9 11h11v9L9 18z" fill="#fff"/></svg></span>
  <span class="tk"><svg class="t1" viewBox="0 0 20 20"><circle cx="12" cy="8" r="6.500" fill="none" stroke="#fff" stroke-width="1.400"/><path d="M7 13l-6 6" stroke="#fff" stroke-width="1.400"/></svg></span>
  <span class="tk"><svg class="t1" viewBox="0 0 20 20"><circle cx="10" cy="10" r="8" fill="none" stroke="#fff" stroke-width="2.200"/></svg></span>
  <span class="tk"><svg class="t1" viewBox="0 0 20 20"><path d="M1 1h12M1 19h12M2 6h10v8H2zM16 1v5M16 9v2M16 15v4" fill="none" stroke="#fff" stroke-width="1.400"/></svg></span>
  <span class="tk on"><svg class="t2" viewBox="0 0 28 28"><path d="M2 15C3 6 9 2 15 2c7 0 11 5 11 13H10c0 6 9 8 15 4v6c-9 4-19 1-20-7-2 1-3 1-3-3zm8-5h9c0-5-8-5-9 0z" fill="#0a78d7"/></svg></span>
  <span class="tk"><svg class="t2" viewBox="0 0 28 28"><path d="M1 3h11l2 3h13v19H1z" fill="#f5c33e"/><path d="M1 3h11l2 3H1z" fill="#e5a72a"/><path d="M8 20h12v5H8z" fill="#2b8fd6"/><path d="M11 22h6v3h-6z" fill="#f5e08a"/></svg></span>
  <span class="tk"><svg class="t2" viewBox="0 0 28 28"><circle cx="14" cy="14" r="13" fill="#e5443a"/><path d="M14 14L3 21A13 13 0 0 0 18 26.500z" fill="#3aa757"/><path d="M14 14L18 26.500A13 13 0 0 0 27 12H14z" fill="#f9c22e"/><circle cx="14" cy="14" r="6" fill="#fff"/><circle cx="14" cy="14" r="4.500" fill="#4a8af2"/></svg></span>
  <span class="tk"><svg class="t3" viewBox="0 0 30 30"><rect width="30" height="30" rx="5" fill="#222"/><circle cx="15" cy="15" r="8.500" fill="none" stroke="#f2b91c" stroke-width="2.500"/><path d="M9 15l3-2 3 3 3-4 4 3" fill="none" stroke="#f2b91c" stroke-width="1.500"/></svg></span>
  <span class="tk"><svg class="t2" viewBox="0 0 28 30"><ellipse cx="14" cy="11" rx="8" ry="10" fill="#111"/><ellipse cx="14" cy="21" rx="8" ry="8" fill="#fff"/><path d="M6 14h16v3l-3 1v4h-3v-4H6z" fill="#e22"/><circle cx="11" cy="7" r="2" fill="#fff"/><circle cx="17" cy="7" r="2" fill="#fff"/><path d="M11 10h6l-3 3z" fill="#fb0"/><path d="M8 28h5v2H8zM15 28h5v2h-5z" fill="#fb0"/></svg></span>
  <span class="tk on"><span class="cadic">CAD</span></span>
  <span class="tk on"><span class="wps">W</span></span>
  <span class="tk on hl"><span class="tlogo">T</span></span>
  <div class="tray">
    <svg class="tp p1" viewBox="0 0 20 20"><circle cx="6" cy="11" r="3" fill="none" stroke="#fff" stroke-width="1.300"/><circle cx="14" cy="5" r="3.500" fill="none" stroke="#fff" stroke-width="1.300"/><path d="M1 19c0-3 2-5 5-5s4 1 4 5M10 10c1-1 2-1 4-1 3 0 4 2 4 4" fill="none" stroke="#fff" stroke-width="1.300"/></svg>
    <svg class="tp p2" viewBox="0 0 18 10"><path d="M1 9l8-8 8 8" fill="none" stroke="#fff" stroke-width="1.300"/></svg>
    <svg class="tp p3" viewBox="0 0 20 20"><ellipse cx="8" cy="8" rx="5" ry="7" fill="#222"/><path d="M3 10h10v3H3z" fill="#e22"/><ellipse cx="8" cy="15" rx="5" ry="4" fill="#fff"/><path d="M10 9h9v8h-9z" fill="#f6b53a"/><path d="M12 13h1M15 13h1" stroke="#7a4a00" stroke-width="1.500"/></svg>
    <svg class="tp p4" viewBox="0 0 20 20"><path d="M2 18A16 16 0 0 1 18 2M6 18A12 12 0 0 1 18 6M10 18A8 8 0 0 1 18 10" fill="none" stroke="#ccc" stroke-width="1.200"/><circle cx="15" cy="15" r="2" fill="#ccc"/></svg>
    <svg class="tp p5" viewBox="0 0 22 20"><path d="M1 7h4l5-5v16l-5-5H1z" fill="none" stroke="#ddd" stroke-width="1.200"/><path d="M13 7c1 2 1 4 0 6M16 4c2 4 2 8 0 12M19 2c2 5 2 11 0 16" fill="none" stroke="#888" stroke-width="1.100"/></svg>
    <svg class="tp p6" viewBox="0 0 22 22"><path d="M4 21c-3-2-3-5-1-7l9-10c2-3 7 0 5 3l-9 10c-1 1-3 0-2-1l8-9" fill="none" stroke="#fff" stroke-width="1.300"/></svg>
    <span class="ime">中</span>
    <span class="pin">拼</span>
    <span class="clock"><b>15:43</b><b>2020-09-05</b></span>
    <svg class="tp p7" viewBox="0 0 20 20"><path d="M1 2h18v13h-7l-2 3-2-3H1z" fill="none" stroke="#fff" stroke-width="1.200"/></svg>
  </div>
</nav>
</body>
</html>
```

FILE: styles.css
```css
* { box-sizing: border-box; }
html, body { margin: 0; padding: 0; }
body {
  width: 1920px; height: 1080px; overflow: hidden;
  display: flex; flex-direction: column;
  font-family: "Noto Sans CJK SC", "Noto Sans", sans-serif;
  font-size: 15px; color: #333; background: #e0e1e3;
}
.defs { display: none; }
i, em { font-style: normal; }

/* header */
.head { height: 50px; display: flex; background: #fff; flex: none; border-bottom: 1px solid #d7d9db; }
.logo-box { width: 57px; padding: 10px 0 0 11px; background: #fff; }
.logo {
  width: 36px; height: 35px; border-radius: 8px;
  background: linear-gradient(#2fb7f2, #1372e2);
  color: #fff; font: bold 34px/35px "Liberation Sans", sans-serif; text-align: center;
}
.head-main { flex: 1; display: flex; flex-direction: column; }
.row-title { height: 27px; display: flex; align-items: center; }
.qat { width: 390px; display: flex; align-items: center; padding-left: 11px; }
.q { width: 20px; height: 20px; margin-right: 9px; flex: none; }
.dn { font-size: 10px; color: #a8a8a8; width: 10px; margin-left: -6px; margin-right: 6px; }
.title { margin: -3px 0 0 239px; white-space: nowrap; color: #2a2a2a; font-size: 15px; line-height: 24px; letter-spacing: .36px; }
.winctl { margin-left: auto; display: flex; align-items: center; color: #555; }
.wc-min { width: 8px; height: 3px; background: #777; margin: 5px 42px 0 0; }
.wc-res { width: 9px; height: 11px; border: 1.500px solid #666; margin-right: 36px; }
.wc-x { font: 15px "Liberation Sans", sans-serif; margin-right: 18px; }
.row-tabs { height: 22px; display: flex; align-items: flex-end; }
.tab { padding: 0 16.500px; height: 23px; line-height: 22px; color: #444; }
.tab:first-child { margin-left: 5px; }
.tab.on { background: #5aa5ef; color: #fff; border-radius: 3px 3px 0 0; }
.search {
  margin-left: auto; width: 304px; height: 21px; margin-bottom: 1px;
  border: 2px solid #dedede; padding: 0 4px; display: flex; align-items: center; justify-content: space-between;
  font-size: 13px; color: #c3c3c3;
}
.sr { width: 16px; height: 16px; }
.user { width: 236px; display: flex; align-items: center; height: 23px; padding-left: 14px; }
.u1 { width: 12px; height: 12px; flex: none; }
.uname { margin: 0 12px 0 9px; color: #222; white-space: nowrap; flex: none; width: 46px; letter-spacing: 0; }
.ui { width: 20px; height: 20px; margin-right: 9px; flex: none; }
.qm { font-size: 20px; line-height: 20px; color: #6f7377; width: 27px; flex: none; }
.qm i { font-size: 9px; }

/* ribbon */
.ribbon { height: 122px; flex: none; display: flex; background: linear-gradient(#fff 0%, #fdfdfd 50%, #eceef0 100%); }
.grp { display: flex; flex-direction: column; border-right: 2px solid #dcdee0; margin: 3px 0 4px; }
.g1 { width: 182px; padding-left: 10px; }
.g2 { width: 256px; padding-left: 11px; }
.g3 { width: 306px; padding-left: 6px; }
.g4 { width: 209px; padding-left: 7px; }
.grp-body { height: 87px; margin-top: 4px; display: flex; }
.glabel { flex: 1; display: flex; align-items: center; justify-content: center; color: #333; padding-top: 6px; }
.g1 .glabel { margin-left: -4px; }
.big { display: flex; flex-direction: column; align-items: center; height: 84px; padding-top: 3px; position: relative; white-space: nowrap; }
.big.on { background: #c7d7ee; }
.big span { margin-top: 3.500px; line-height: 22px; }
.ib { width: 36px; height: 38px; }
.ar { font-size: 11px; line-height: 10px; color: #666; margin-top: 2px; }
.w50 { width: 50px; } .w56 { width: 56px; } .w62 { width: 62px; } .w68 { width: 68px; } .w71 { width: 71px; }
.col { display: flex; flex-direction: column; gap: 4.200px; margin-top: -.5px; }
.c1 { margin-left: 7px; }
.c3a { margin-left: 5px; width: 80px; }
.sm { height: 24px; display: flex; align-items: center; white-space: nowrap; }
.is { width: 18px; height: 20px; margin-right: 5px; flex: none; }
.ar2 { font-size: 11px; color: #666; margin-left: 8px; }
.ug { display: grid; grid-template-columns: 98px 98px; grid-auto-rows: 24px; row-gap: 4.500px; align-content: start; margin-top: 3.500px; }
.us { height: 24px; display: flex; align-items: center; white-space: nowrap; padding-left: 3px; color: #333; }
.us.on { background: #c7d7ee; }
.iu { width: 17px; height: 22px; margin-right: 5px; flex: none; }
.w80 { width: 80px; } .w95 { width: 95px; } .w65 { width: 65px; }

/* selector bar */
.selbar { height: 33px; flex: none; background: #c9ccd0; border-top: 2px solid #a5a8ac; padding: 3px 2px 0; display: flex; gap: 2px; }
.combo { width: 124px; height: 26px; background: #fff; padding-left: 3px; line-height: 25px; position: relative; color: #333; }
.combo i { position: absolute; right: 6px; top: 0; font-size: 11px; color: #666; }

/* main */
.main { height: 787px; flex: none; display: flex; background: #e0e1e3; }
.panel { background: #fff; border: 1px solid #d0d1d3; display: flex; flex-direction: column; }
.nav { width: 262px; height: 787px; margin-right: 6px; border-top: 0; }
.strip { height: 17px; background: #d6d7da; flex: none; text-align: right; padding: 0 5px; color: #8c8c8c; font-size: 15px; line-height: 15px; }
.ptitle { height: 29px; background: #f0f0f0; border-bottom: 1px solid #d5d5d5; color: #959595; line-height: 24px; padding-left: 10px; flex: none; }
.ptitle.rp { height: 28px; }
.navtool { height: 35px; background: #f0f0f0; border-bottom: 2px solid #dcdcdc; display: flex; align-items: center; flex: none; padding-left: 9px; padding-right: 1px; gap: 5px; }
.sp { width: 16px; height: 16px; margin-right: auto; }
.tb { width: 30px; height: 28px; border: 1px solid #6eaff0; border-radius: 5px; display: flex; align-items: center; justify-content: center; background: #f4f8fc; }
.tb svg { width: 20px; height: 18px; }
.tree { padding-top: .5px; flex: 1; }
.ti { height: 30.050px; display: flex; align-items: center; padding-left: 4px; color: #333; white-space: nowrap; }
.fo { width: 18px; height: 20px; margin-right: 8px; flex: none; }
.sub { padding-left: 51px; }
.actbg { display: flex; align-items: center; height: 26px; width: 100px; padding-left: 5px; }
.act .actbg { background: #c7d7ee; }
.ci { width: 17px; height: 22px; margin-right: 9px; flex: none; }
.vip { background: #f8da62; color: #e0a93d; font: bold 11px/13px "Liberation Serif", serif; width: 37px; height: 13px; text-align: center; margin-left: 6px; }

.midcol { width: 350px; margin-right: 4px; display: flex; flex-direction: column; gap: 6px; }
.mtop { height: 454px; border-top: 0; }
.mbot { height: 327px; border-top: 0; }
.ptabs { height: 28px; background: #f0f0f0; border-bottom: 1px solid #d5d5d5; display: flex; flex: none; }
.pt { width: 81px; text-align: center; line-height: 27px; background: #e1e1e1; color: #959595; border-right: 1px solid #d5d5d5; }
.pt.on { background: #f0f0f0; color: #333; }
.mtool { height: 35px; background: #f0f0f0; display: flex; align-items: center; padding-left: 7px; flex: none; color: #555; }
.mt { display: flex; align-items: center; margin-right: 8px; white-space: nowrap; }
.mt svg { width: 20px; height: 22px; margin-right: 5px; }
.mt i { font-size: 11px; margin-left: 7px; color: #666; }
.dtable { position: relative; flex: 1; background: #fff; }
.dr { display: grid; grid-template-columns: 219px 44px 68px; height: 26.200px; border-bottom: 1.500px solid #e6e6e6; align-items: center; white-space: nowrap; position: relative; }
.dr > span { border-right: 1px solid #e2e2e2; height: 100%; display: flex; align-items: center; overflow: hidden; }
.dr > span:nth-child(2) { justify-content: center; }
.dr > span:nth-child(3) { padding-left: 3px; border-right: 0; letter-spacing: -.6px; }
.dh { height: 32px; background: #f0f0f0; width: 331px; border-bottom: 1.500px solid #ddd; }
.dh > span { justify-content: center; color: #555; }
.dh > span:nth-child(3) { padding-left: 7px; justify-content: flex-start; letter-spacing: 0; }
.dh .hs { background: #6aacf0; color: #fff; }
.dr.leaf { width: 331px; }
.leaf > span:first-child { padding-left: 38px; }
.leaf::before { content: ""; position: absolute; left: 10px; top: -1px; height: 14px; width: 21px; border-left: 1px solid #e4e4e4; border-bottom: 1px solid #e4e4e4; }
.sel { background: #d8eafd; }
.sel > span:first-child { outline: 2px solid #6f6f6f; outline-offset: -2px; }
.grpr { display: flex; padding-left: 3px; width: 331px; }
.mbox { display: inline-block; width: 15px; height: 15px; border: 1px solid #999; border-radius: 2px; position: relative; margin-right: 8px; flex: none; background: #fff; }
.mbox::after { content: ""; position: absolute; left: 3px; right: 3px; top: 6px; height: 1px; background: #555; }
.lk { width: 14px; height: 18px; }
.vsb { position: absolute; left: 334px; top: 222px; width: 9px; height: 119px; background: #c9c9c9; border-radius: 5px; }
.hsb { position: absolute; left: 17px; top: 363px; width: 197px; height: 10px; background: #c9c9c9; border-radius: 5px; }
.ltool { height: 35px; background: #f0f0f0; border-bottom: 1px solid #dcdcdc; display: flex; align-items: center; gap: 9px; padding-left: 6px; color: #555; flex: none; }
.lhead { height: 26px; background: #f0f0f0; display: grid; grid-template-columns: 63px 46px 188px; flex: none; }
.lhead span { text-align: center; line-height: 25px; border-right: 1px solid #d8d8d8; border-bottom: 1.500px solid #d8d8d8; color: #444; }
.lrow { height: 26.500px; display: grid; grid-template-columns: 63px 46px 188px; width: 297px; }
.lrow > span { border-right: 1px solid #e2e2e2; border-bottom: 1.500px solid #e2e2e2; display: flex; align-items: center; justify-content: center; }
.lrow > .ln { justify-content: flex-start; padding-left: 5px; white-space: nowrap; }
.tri { width: 0; height: 0; border-left: 6px solid #c4c4c4; border-top: 5px solid transparent; border-bottom: 5px solid transparent; }
.chk { display: inline-block; width: 17px; height: 17px; background: #5aa5f5; border-radius: 3px; position: relative; }
.chk::after { content: ""; position: absolute; left: 6px; top: 3px; width: 5px; height: 8px; border: solid #fff; border-width: 0 2px 2px 0; transform: rotate(42deg); }
.box { display: inline-block; width: 17px; height: 17px; border: 1px solid #8f8f8f; border-radius: 3px; background: #fff; }
.box.dis { background: #efefef; border-color: #c9c9c9; }

/* canvas */
.canvas { width: 943px; height: 785px; margin-top: 2px; margin-right: 6px; position: relative; flex: none; background: #000; }
.cad { display: block; width: 943px; height: 785px; }
.cad text { font-weight: 100; }
.ct text { fill: #f0f0f0; stroke: #f0f0f0; stroke-width: .45px; font-family: Roboto, "Noto Sans CJK SC", sans-serif; }
.cm text { fill: #f020f0; stroke: #f020f0; stroke-width: .4px; font-family: Roboto, "Noto Sans CJK SC", sans-serif; }
.cm .thin { fill: #c01ec0; stroke: #c01ec0; stroke-width: .3px; }
.co text { fill: #d87208; stroke: #d87208; stroke-width: .5px; font-family: Roboto, "Noto Sans CJK SC", sans-serif; }
.gy { fill: #1fe01f; font-family: "Liberation Sans", sans-serif; }
.rx { fill: #e61010; font-family: "Liberation Sans", sans-serif; }
.vtools { position: absolute; left: 902px; top: 1px; width: 40px; height: 283px; background: #a7aaae; display: flex; flex-direction: column; align-items: center; padding-top: 12px; border-radius: 2px; }
.vt { width: 30px; height: 30px; flex: none; margin-bottom: 7px; }
.vd { font-size: 11px; line-height: 9px; color: #4a5560; margin: -3px 0 6px; }
.vs { width: 30px; border: 0; border-top: 1px solid #7d8186; margin: 0 0 6px; }

/* right */
.right { width: 349px; height: 787px; border-top: 0; }
.rtabs { height: 35px; background: #f0f0f0; display: flex; padding: 5px 0 0 3px; gap: 5px; border-bottom: 1px solid #dcdcdc; flex: none; }
.rt { width: 92px; height: 29px; text-align: center; line-height: 28px; background: #e2e2e2; color: #8a8a8a; border-radius: 4px 4px 0 0; margin-top: 1px; }
.rt.on { background: #fff; color: #3f8ede; height: 30px; margin-top: 0; margin-bottom: -1px; }
.rtable { margin: 2px 2px 0 2px; height: 660px; border: 1px solid #e2e2e2; position: relative; flex: none; }
.rh, .rr { display: grid; grid-template-columns: 165px 78px 79px; width: 323px; }
.rh { height: 27px; background: #f0f0f0; }
.rh span { text-align: center; line-height: 26px; border-right: 1px solid #e0e0e0; border-bottom: 1px solid #d8d8d8; color: #555; }
.rh .hs { background: #6fb0f2; color: #fff; }
.rr { height: 26.250px; position: relative; }
.rr > span { border-bottom: 1.500px solid #e4e4e4; border-right: 1px solid #e4e4e4; display: flex; align-items: center; white-space: nowrap; }
.cc { justify-content: center; }
.l0 .n { padding-left: 3px; }
.l1 .n { padding-left: 15px; }
.l2 .n { padding-left: 51px; }
.l2::before { content: ""; position: absolute; left: 24px; top: -1px; height: 14px; width: 21px; border-left: 1px solid #e4e4e4; border-bottom: 1px solid #e4e4e4; }
.cur > span:nth-child(2) { outline: 2px solid #6f6f6f; outline-offset: -2px; }
.rsb { position: absolute; left: 327px; top: 19px; width: 10px; height: 143px; background: #cfcfcf; border-radius: 5px; }
.rfoot { flex: 1; display: flex; justify-content: flex-end; padding: 5px 12px 0 0; }
.rbtn { width: 110px; height: 31px; background: #fff; border: 1px solid #e0e0e0; border-radius: 3px; font: inherit; color: #333; padding: 0; }

/* status */
.status { height: 38px; flex: none; background: #dfe0e2; border-bottom: 2px solid #fff; display: flex; align-items: center; color: #555; white-space: nowrap; position: relative; font-size: 15px; }
.s-xy { margin-left: 3px; width: 328px; letter-spacing: 1.100px; }
.s-h1 { width: 50px; }
.s-h2 { width: 53px; }
.s-e1 { width: 51px; }
.s-e2 { width: 115px; }
.s-z { width: 130px; }
.s-hid { width: 129px; }
.sb { height: 30px; border: 2px solid #c5c5c5; background: #dfe0e2; display: flex; align-items: center; justify-content: center; flex: none; position: relative; margin-right: 4px; }
.sb svg { width: 22px; height: 22px; }
.sb i { font-size: 10px; margin-left: 3px; color: #555; }
.b1 { width: 31px; }
.b2 { width: 45px; background: #fff; border-color: #6aa8ee; margin-right: 7px; }
.b3 { width: 31px; margin-right: 8px; }
.b4 { width: 45px; }
.wa { width: 91px; }
.wb { width: 76px; margin-right: 7px; }
.s-hint { width: 559px; }
.s-fps { width: 87px; }
.fpsw { position: absolute; right: 0; top: -42px; width: 13px; height: 72px; background: #4a5058; border-radius: 4px 0 0 4px; padding: 10px 3px; }
.fpsw i { display: block; height: 100%; background: repeating-linear-gradient(#000 0 1px, transparent 1px 3px), linear-gradient(#777 0 15%, #d89a3a 25%, #c8c840 50%, #60c890 80%, #40c8c0); }

/* taskbar */
.taskbar { height: 50px; flex: none; background: linear-gradient(#1c1e22, #0c0e11); display: flex; align-items: stretch; color: #fff; }
.tk { width: 60px; display: flex; align-items: center; justify-content: center; flex: none; }
.tk:nth-child(5) { margin-left: 6px; width: 53px; margin-right: 6px; }
.tk:nth-child(6) { margin: 0 4px; width: 53px; }
.tk:nth-child(7) { margin: 0 5px; width: 53px; }
.tk:nth-child(8) { margin: 0 4px; width: 53px; }
.tk:nth-child(9) { margin: 0 5px; width: 53px; }
.tk:nth-child(10) { margin: 0 5px; width: 52px; }
.tk:nth-child(11) { margin: 0 5px; width: 52px; }
.tk:nth-child(12) { margin: 0 0 0 1px; width: 60px; background: #3a3d42; }
.tk.on { border-bottom: 3px solid #76b9ed; }
.t1 { width: 20px; height: 20px; }
.t2 { width: 28px; height: 28px; }
.t3 { width: 30px; height: 30px; }
.cadic { width: 30px; height: 30px; border-radius: 3px; background: linear-gradient(#3f7fc8, #0f4a98); border: 1px solid #9aa6b2; font: 12px/28px "Liberation Sans", sans-serif; text-align: center; color: #d5e5f8; }
.wps { width: 27px; height: 32px; border-radius: 5px; background: linear-gradient(#3f9bff, #1474e6); font: bold 17px/32px "Liberation Serif", serif; text-align: center; }
.tlogo { width: 30px; height: 36px; border-radius: 6px; background: linear-gradient(#2fb7f2, #1372e2); font: bold 30px/36px "Liberation Sans", sans-serif; text-align: center; }
.tray { margin-left: auto; width: 450px; display: flex; align-items: center; }
.tp { flex: none; }
.p1 { width: 20px; height: 20px; margin-left: 10px; }
.p2 { width: 17px; height: 10px; margin-left: 23px; }
.p3 { width: 20px; height: 20px; margin-left: 13px; }
.p4 { width: 18px; height: 18px; margin-left: 12px; }
.p5 { width: 21px; height: 18px; margin-left: 10px; }
.p6 { width: 21px; height: 21px; margin-left: 14px; }
.ime { font-size: 18px; margin-left: 11px; width: 22px; text-align: center; }
.pin { width: 18px; height: 18px; background: #fff; color: #111; font-size: 14px; line-height: 18px; text-align: center; margin-left: 18px; }
.clock { display: flex; flex-direction: column; align-items: center; width: 84px; margin-left: 27px; font-size: 15px; line-height: 22px; }
.clock b { font-weight: 400; font-family: "Noto Sans", sans-serif; }
.p7 { width: 20px; height: 20px; margin-left: 21px; }
```
